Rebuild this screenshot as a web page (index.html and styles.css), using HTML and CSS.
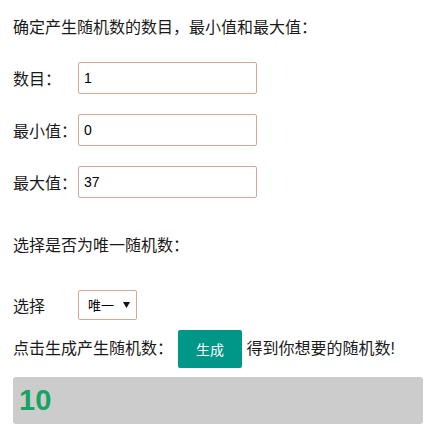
FILE: index.html
```html
<!DOCTYPE html>
<html lang="zh-CN">
<head>
    <meta charset="UTF-8">
    <meta name="viewport" content="width=device-width, initial-scale=1.0">
    <title>随机数生成器</title>
    <link rel="stylesheet" href="styles.css">
</head>
<body>
    <div class="container">
        <p class="title">确定产生随机数的数目，最小值和最大值：</p>

        <div class="row first">
            <label for="count">数目：</label>
            <input type="text" id="count" value="1">
        </div>
        <div class="row">
            <label for="min">最小值：</label>
            <input type="text" id="min" value="0">
        </div>
        <div class="row">
            <label for="max">最大值：</label>
            <input type="text" id="max" value="37">
        </div>

        <p class="title second">选择是否为唯一随机数：</p>

        <div class="row select-row">
            <label for="unique">选择</label>
            <span class="select-wrap">
                <select id="unique">
                    <option value="1">唯一</option>
                    <option value="0">不唯一</option>
                </select>
                <svg class="arrow" width="7" height="6" viewBox="0 0 7 6"><path d="M0 0h7L3.5 6z" fill="#111"/></svg>
            </span>
        </div>

        <div class="action">
            点击生成产生随机数：<button onclick="generate()">生成</button> 得到你想要的随机数!
        </div>

        <div id="result" class="result">10</div>
    </div>

    <script>
        // 生成随机数
        function generate() {
            const count = parseInt(document.getElementById("count").value) || 1;
            const min = parseInt(document.getElementById("min").value) || 0;
            const max = parseInt(document.getElementById("max").value) || 0;
            const unique = document.getElementById("unique").value === "1";
            let nums = [];

            while (nums.length < count) {
                const n = Math.floor(Math.random() * (max - min + 1)) + min;
                if (unique && nums.includes(n)) {
                    if (max - min + 1 <= nums.length) break;
                    continue;
                }
                nums.push(n);
            }
            document.getElementById("result").textContent = nums.join(", ");
        }
    </script>
</body>
</html>
```

FILE: styles.css
```css
body {
    margin: 0;
    font-family: "Liberation Sans", "Noto Sans CJK SC", sans-serif;
    font-size: 16px;
    color: #1a1a1a;
    background-color: #fff;
}
.container {
    padding: 17px 4px 0 13px;
}
.title {
    margin: 0;
    line-height: 21px;
}
.title.second {
    margin-top: 37px;
}
.row {
    display: flex;
    align-items: center;
    margin-top: 20px;
}
.row.first {
    margin-top: 24px;
}
.row label {
    width: 65px;
    flex-shrink: 0;
}
.row input {
    width: 179px;
    height: 32px;
    box-sizing: border-box;
    border: 1px solid #d2a997;
    border-radius: 2px;
    padding: 0 5px;
    font-family: "Liberation Sans", "Noto Sans CJK SC", sans-serif;
    font-size: 14px;
    color: #000;
    outline: none;
}
.select-row {
    margin-top: 34px;
}
.select-wrap {
    position: relative;
    display: inline-block;
}
.select-wrap select {
    appearance: none;
    -webkit-appearance: none;
    width: 59px;
    height: 30px;
    box-sizing: border-box;
    border: 1px solid #d2a997;
    border-radius: 2px;
    background-color: #fff;
    padding: 0 0 0 9px;
    font-family: "Liberation Sans", "Noto Sans CJK SC", sans-serif;
    font-size: 13px;
    color: #000;
    outline: none;
}
.select-wrap .arrow {
    position: absolute;
    right: 7px;
    top: 12px;
    pointer-events: none;
}
.action {
    margin-top: 10px;
    line-height: 38px;
}
.action button {
    background-color: #009688;
    color: #fff;
    border: none;
    border-radius: 2px;
    width: 64px;
    height: 38px;
    margin-left: 5px;
    font-family: "Liberation Sans", "Noto Sans CJK SC", sans-serif;
    font-size: 14px;
    cursor: pointer;
    vertical-align: top;
}
.result {
    margin-top: 9px;
    height: 47px;
    box-sizing: border-box;
    background-color: #ccc;
    border-radius: 3px;
    padding: 0 6px;
    line-height: 47px;
    font-size: 29px;
    font-weight: bold;
    color: #16a463;
}
```
